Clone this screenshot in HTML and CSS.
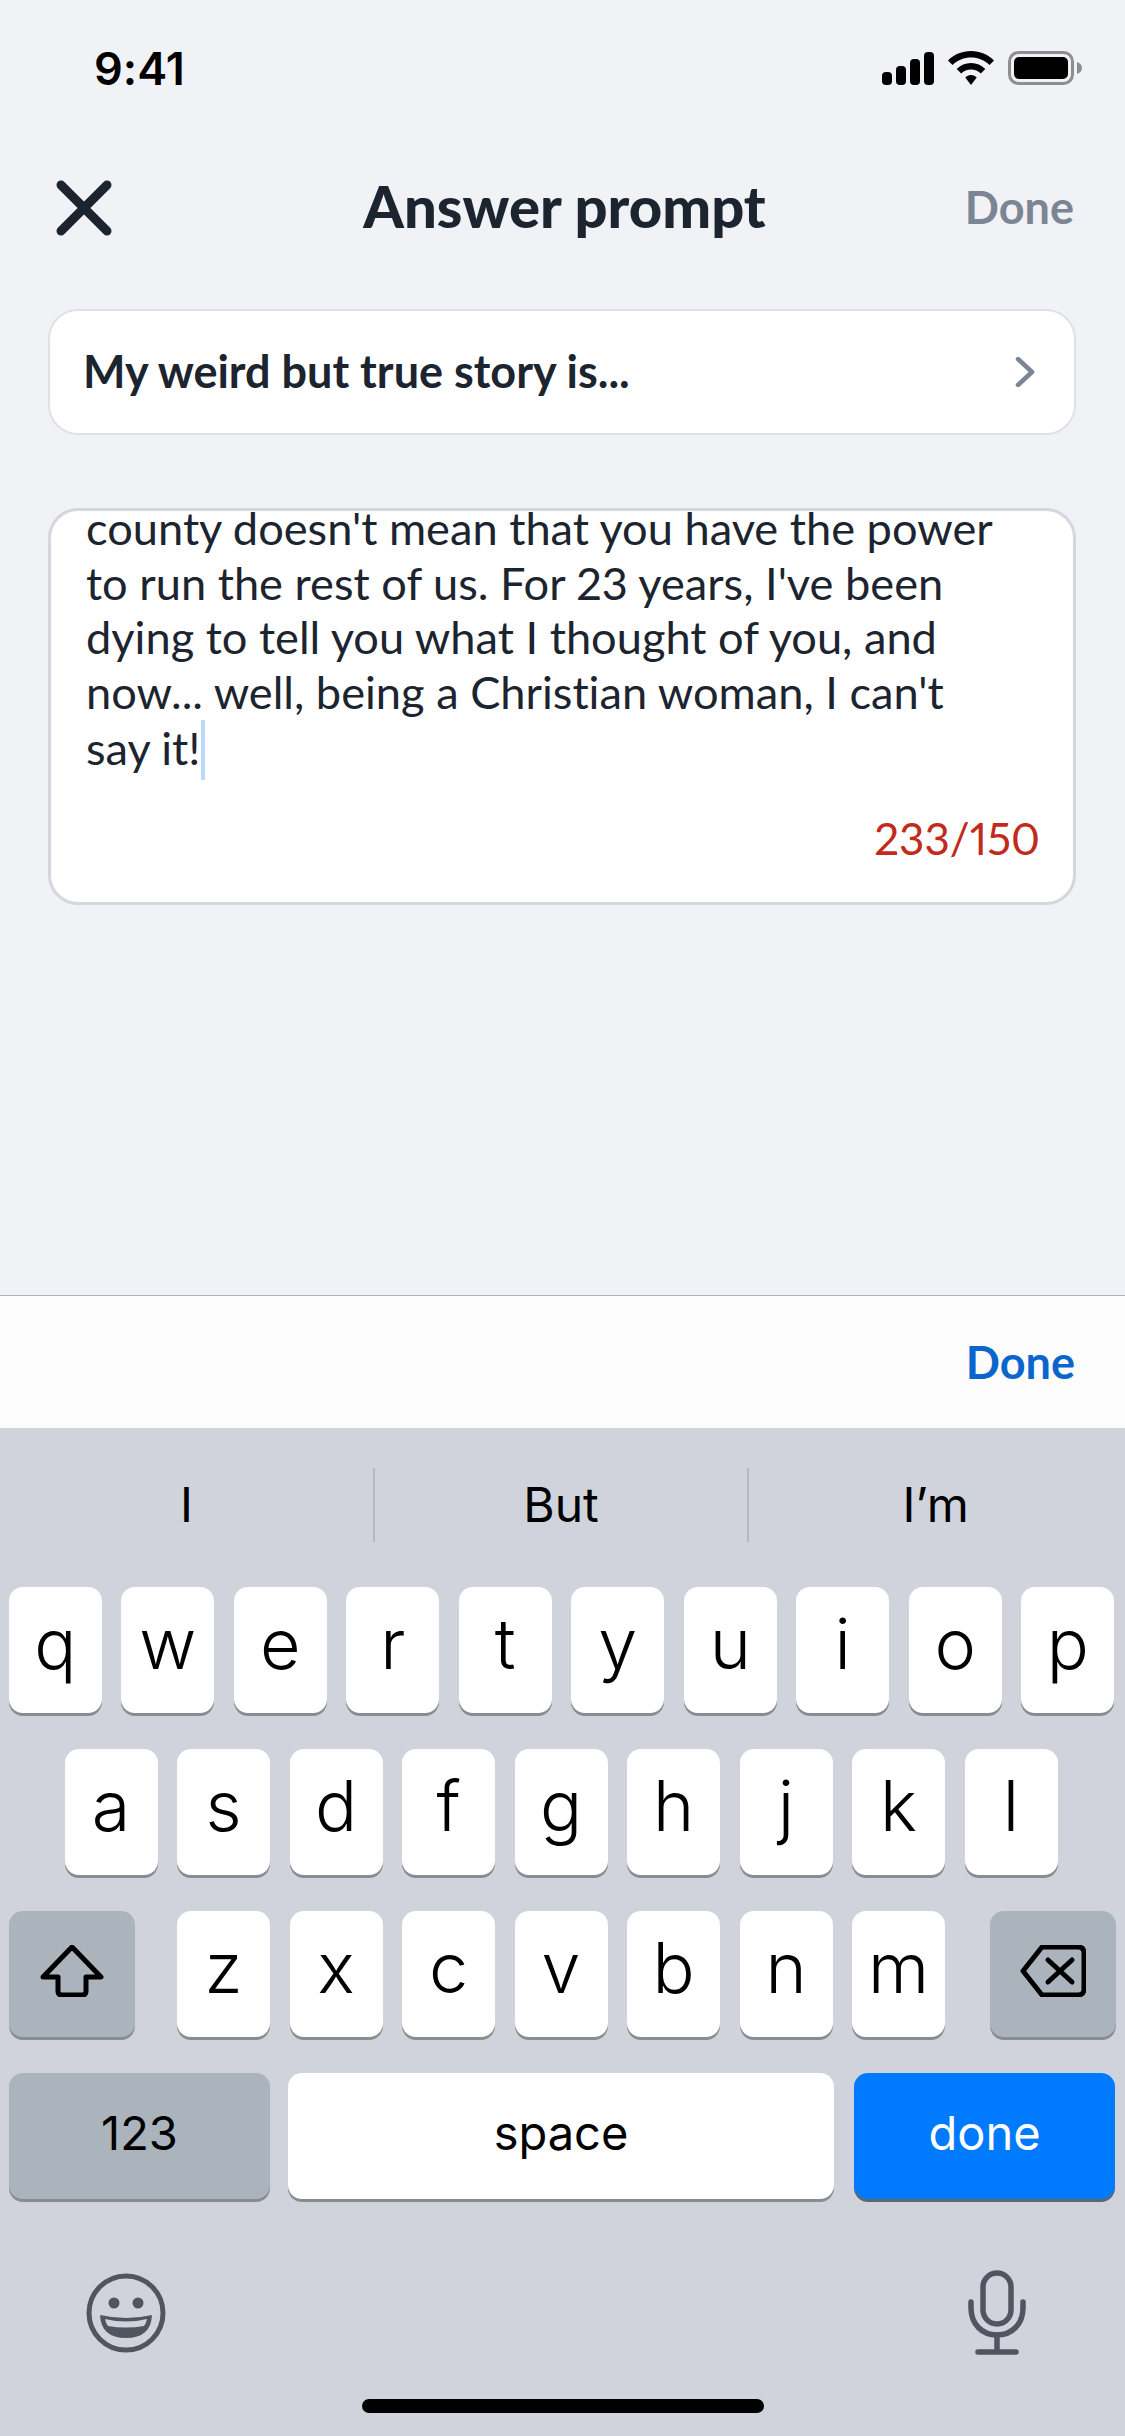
FILE: index.html
```html
<!DOCTYPE html>
<html lang="en">

<head>
    <meta charset="UTF-8">
    <meta name="viewport" content="width=device-width, initial-scale=1.0">
    <title>Answer prompt</title>
    <link rel="stylesheet" href="styles.css">
</head>

<body>
    <div class="screen">
        <div class="status-bar">
            <span class="time">9:41</span>
            <div class="status-icons">
                <svg class="signal" width="52" height="33" viewBox="0 0 52 33">
                    <rect x="0" y="20" width="10" height="13" rx="4" />
                    <rect x="14" y="14" width="10" height="19" rx="4" />
                    <rect x="28" y="7" width="10" height="26" rx="4" />
                    <rect x="42" y="0" width="10" height="33" rx="4" />
                </svg>
                <svg class="wifi" width="46" height="34" viewBox="0 0 46 34">
                    <path d="M23 0C14 0 6 3.500 0 9.500L4.500 14C9.500 9 16 6.500 23 6.500S36.500 9 41.500 14L46 9.500C40 3.500 32 0 23 0Z" />
                    <path d="M23 12C17.500 12 12.500 14.200 8.700 18L13.200 22.500C15.800 20 19.200 18.500 23 18.500S30.200 20 32.800 22.500L37.300 18C33.500 14.200 28.500 12 23 12Z" />
                    <path d="M23 24C20.500 24 18.800 25 17.300 26.500L23 34L28.700 26.500C27.200 25 25.500 24 23 24Z" />
                </svg>
                <svg class="battery" width="74" height="34" viewBox="0 0 74 34">
                    <rect x="1.500" y="1.500" width="63" height="31" rx="9" fill="none" stroke="#8e8e90" stroke-width="3" />
                    <rect x="6" y="6" width="54" height="22" rx="5" />
                    <path d="M69 11C72 12 74 14 74 17S72 22 69 23Z" fill="#8e8e90" />
                </svg>
            </div>
        </div>

        <div class="nav-bar">
            <svg class="close-icon" width="58" height="58" viewBox="0 0 58 58">
                <path d="M6 6L52 52M52 6L6 52" />
            </svg>
            <h1 class="nav-title">Answer prompt</h1>
            <span class="nav-done">Done</span>
        </div>

        <div class="prompt-card">
            <span class="prompt-text">My weird but true story is...</span>
            <svg class="chevron" width="20" height="30" viewBox="0 0 20 30">
                <path d="M3 2L17 15L3 28" />
            </svg>
        </div>

        <div class="answer-box">
            <div class="answer-text">
                <div>county doesn't mean that you have the power</div>
                <div>to run the rest of us. For 23 years, I've been</div>
                <div>dying to tell you what I thought of you, and</div>
                <div>now... well, being a Christian woman, I can't</div>
                <div>say it!<span class="caret"></span></div>
            </div>
            <div class="counter">233/150</div>
        </div>

        <div class="accessory-bar">
            <span class="accessory-done">Done</span>
        </div>

        <div class="keyboard">
            <div class="suggestions">
                <div class="suggestion">I</div>
                <div class="suggestion">But</div>
                <div class="suggestion">I’m</div>
            </div>

            <div class="key-row key-row-top">
                <div class="key">q</div>
                <div class="key">w</div>
                <div class="key">e</div>
                <div class="key">r</div>
                <div class="key">t</div>
                <div class="key">y</div>
                <div class="key">u</div>
                <div class="key">i</div>
                <div class="key">o</div>
                <div class="key">p</div>
            </div>
            <div class="key-row key-row-home">
                <div class="key">a</div>
                <div class="key">s</div>
                <div class="key">d</div>
                <div class="key">f</div>
                <div class="key">g</div>
                <div class="key">h</div>
                <div class="key">j</div>
                <div class="key">k</div>
                <div class="key">l</div>
            </div>
            <div class="key-row key-row-split">
                <div class="key key-action">
                    <svg class="key-icon" width="64" height="52" viewBox="0 0 64 52">
                        <path d="M32 2L61 32H46V46Q46 50 42 50H22Q18 50 18 46V32H3Z" />
                    </svg>
                </div>
                <div class="key-group">
                    <div class="key">z</div>
                    <div class="key">x</div>
                    <div class="key">c</div>
                    <div class="key">v</div>
                    <div class="key">b</div>
                    <div class="key">n</div>
                    <div class="key">m</div>
                </div>
                <div class="key key-action">
                    <svg class="key-icon" width="66" height="52" viewBox="0 0 66 52">
                        <path d="M22 2H58Q64 2 64 8V44Q64 50 58 50H22L3 26Z" />
                        <path d="M28 15L52 37M52 15L28 37" />
                    </svg>
                </div>
            </div>
            <div class="key-row key-row-bottom">
                <div class="key key-action key-wide key-label">123</div>
                <div class="key key-space key-label">space</div>
                <div class="key key-done key-wide key-label">done</div>
            </div>

            <div class="keyboard-footer">
                <svg class="emoji-icon" width="80" height="80" viewBox="0 0 80 80">
                    <circle cx="40" cy="40" r="37" fill="none" stroke="#50555f" stroke-width="5" />
                    <circle cx="28" cy="30" r="5.500" />
                    <circle cx="52" cy="30" r="5.500" />
                    <path d="M14 42Q40 48 66 42Q65 65 40 65Q15 65 14 42Z" />
                    <path d="M19 46Q40 51 61 46Q60 51 58 53Q40 56 22 53Q20 51 19 46Z" fill="#d0d3dc" />
                </svg>
                <svg class="mic-icon" width="58" height="86" viewBox="0 0 58 86">
                    <rect x="15" y="3" width="28" height="51" rx="14" />
                    <path d="M3 32V38C3 54 14 65 29 65S55 54 55 38V32" />
                    <path d="M29 65V82M10 82H48" />
                </svg>
            </div>

            <div class="home-indicator"></div>
        </div>
    </div>
</body>

</html>
```

FILE: styles.css
```css
html,
body {
    padding: 0;
    margin: 0;
}

body {
    font-family: "Lato", "Liberation Sans", sans-serif;
    font-variant-ligatures: none;
    font-variant-numeric: proportional-nums;
    color: #1c2430;
}

.screen {
    display: flex;
    flex-direction: column;
    width: 1125px;
    height: 2436px;
    overflow: hidden;
    background-color: #f1f2f5;
}

/* status bar */
.status-bar {
    display: flex;
    flex: none;
    align-items: center;
    justify-content: space-between;
    box-sizing: border-box;
    height: 136px;
    padding: 0 43px 0 94px;
}

.time {
    font-family: "Inter", "Liberation Sans", sans-serif;
    font-size: 45px;
    font-weight: 600;
    color: #000;
}

.status-icons {
    display: flex;
    align-items: center;
    gap: 14px;
}

/* nav */
.nav-bar {
    display: grid;
    flex: none;
    grid-template-columns: 1fr auto 1fr;
    align-items: center;
    box-sizing: border-box;
    height: 144px;
    padding: 0 51px 0 55px;
}

.close-icon path {
    fill: none;
    stroke: #1c2430;
    stroke-width: 9;
    stroke-linecap: round;
}

.nav-title {
    margin: 0 0 5px;
    font-size: 58px;
    font-weight: 900;
}

.nav-done {
    justify-self: end;
    margin-bottom: 2px;
    font-size: 45px;
    font-weight: 700;
    color: #7c8594;
}

/* prompt */
.prompt-card {
    display: flex;
    flex: none;
    align-items: center;
    justify-content: space-between;
    box-sizing: border-box;
    width: 1028px;
    height: 126px;
    margin: 29px 0 0 48px;
    padding: 0 39px 0 33px;
    background-color: #fff;
    border: 2px solid #dfe1e6;
    border-radius: 30px;
}

.prompt-text {
    margin-bottom: 2px;
    font-size: 45px;
    font-weight: 700;
}

.chevron path {
    fill: none;
    stroke: #7c8594;
    stroke-width: 4.500;
    stroke-linecap: round;
    stroke-linejoin: round;
}

/* answer */
.answer-box {
    flex: none;
    box-sizing: border-box;
    width: 1028px;
    height: 397px;
    margin: 73px 0 0 48px;
    padding: 0 33px 0 35px;
    background-color: #fff;
    border: 3px solid #d4d7de;
    border-radius: 30px;
}

.answer-text {
    margin-top: -10px;
    font-size: 45.200px;
    line-height: 54.700px;
    white-space: nowrap;
}

.caret {
    display: inline-block;
    width: 4px;
    height: 60px;
    margin-left: 1px;
    vertical-align: -15px;
    background-color: #bcd9fb;
}

.counter {
    margin-top: 31px;
    font-size: 44px;
    line-height: 55px;
    text-align: right;
    color: #c22b1c;
}

/* accessory */
.accessory-bar {
    display: flex;
    flex: none;
    align-items: center;
    justify-content: flex-end;
    box-sizing: border-box;
    height: 133px;
    margin-top: auto;
    padding: 0 50px 0 0;
    background-color: #fcfcfc;
    border-top: 1px solid #b0b3ba;
}

.accessory-done {
    font-size: 45px;
    font-weight: 700;
    color: #0a66cc;
}

/* keyboard */
.keyboard {
    display: flex;
    flex: none;
    flex-direction: column;
    height: 1008px;
    font-family: "Inter", "Liberation Sans", sans-serif;
    color: #000;
    background-color: #d0d3dc;
}

.suggestions {
    display: flex;
    flex: none;
    align-items: center;
    box-sizing: border-box;
    height: 159px;
    padding: 0 3px 6px 0;
}

.suggestion {
    flex: 1;
    height: 74px;
    font-size: 48px;
    font-weight: 400;
    line-height: 74px;
    text-align: center;
    border-left: 2px solid #b5b8c1;
}

.suggestion:first-child {
    border-left: 0;
}

.key-row {
    display: flex;
    flex: none;
    justify-content: center;
    gap: 19.500px;
    height: 129px;
    margin-bottom: 33px;
}

.key-row-top {
    padding-right: 2px;
}

.key-row-home {
    padding-right: 3px;
}

.key-row-split {
    justify-content: space-between;
    padding: 0 9px;
}

.key-group {
    display: flex;
    gap: 19.500px;
    margin-right: 3px;
}

.key-row-bottom {
    justify-content: flex-start;
    gap: 18px;
    padding: 0 9px;
    margin-bottom: 0;
}

.key {
    display: flex;
    align-items: center;
    justify-content: center;
    box-sizing: border-box;
    width: 93px;
    height: 126px;
    padding-bottom: 14px;
    font-size: 70px;
    font-weight: 300;
    background-color: #fff;
    border-radius: 14px;
    box-shadow: 0 3px 0 #8a8c92;
}

.key-action {
    width: 126px;
    padding-bottom: 6px;
    background-color: #abb3bd;
}

.key-icon {
    fill: none;
    stroke: #000;
    stroke-width: 5;
    stroke-linejoin: round;
    stroke-linecap: round;
}

.key-label {
    padding-bottom: 7px;
    font-size: 47px;
    font-weight: 400;
}

.key-wide {
    width: 261px;
}

.key-space {
    width: 546px;
}

.key-done {
    margin-left: 2px;
    color: #fff;
    background-color: #007aff;
    box-shadow: 0 3px 0 #5f6670;
}

.keyboard-footer {
    display: flex;
    flex: none;
    align-items: center;
    justify-content: space-between;
    height: 86px;
    margin-top: 68px;
    padding: 0 99px 0 86px;
}

.emoji-icon {
    fill: #50555f;
}

.mic-icon {
    fill: none;
    stroke: #50555f;
    stroke-width: 5.500;
    stroke-linecap: round;
}

.home-indicator {
    flex: none;
    width: 402px;
    height: 14px;
    margin: 43px auto 0;
    background-color: #000;
    border-radius: 7px;
}
```
